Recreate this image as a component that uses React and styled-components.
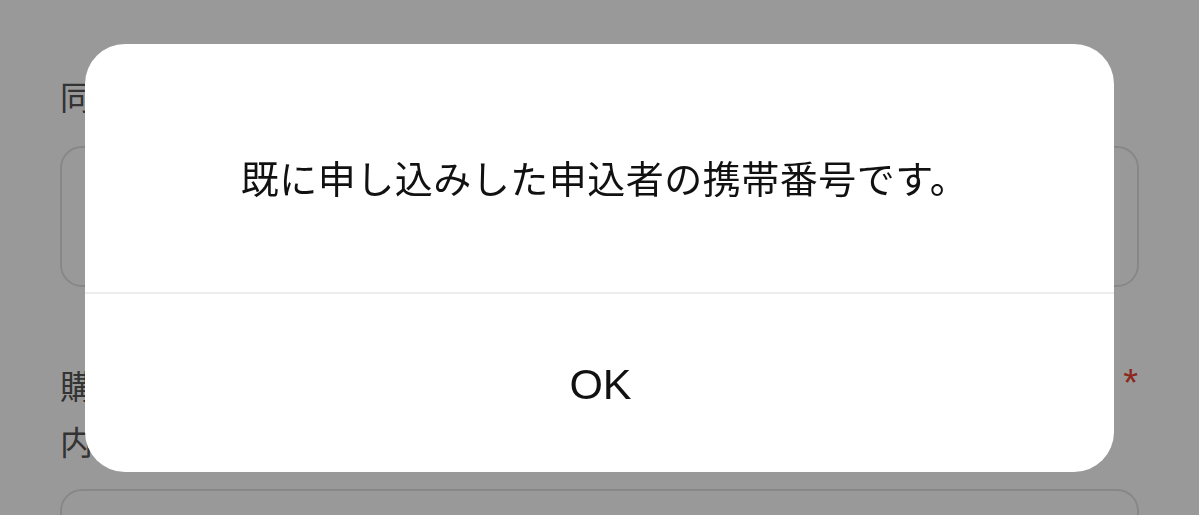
import React from "react";
import styled, { createGlobalStyle } from "styled-components";

const GlobalStyle = createGlobalStyle`
  html, body {
    margin: 0;
    padding: 0;
    background: #ffffff;
  }
  body {
    font-family: "Noto Sans CJK JP", "Noto Sans", sans-serif;
  }
`;

const FormPage = styled.div`
  padding: 72px 60px 0 60px;
  height: 515px;
  box-sizing: border-box;
  overflow: hidden;
`;

const Field = styled.div`
  margin-bottom: ${(p) => p.gapAfter || 0}px;
`;

const LabelRow = styled.div`
  display: flex;
  justify-content: space-between;
  align-items: flex-start;
  margin-bottom: ${(p) => p.gap}px;
`;

const Label = styled.div`
  font-size: 33px;
  line-height: ${(p) => p.lineHeight}px;
  color: #555555;
`;

const Required = styled.span`
  color: #e8432e;
  font-family: "Liberation Sans", sans-serif;
  font-size: 38px;
  line-height: 56px;
  margin-top: -2px;
  margin-right: 1px;
`;

const InputBox = styled.div`
  height: ${(p) => p.h}px;
  border: 2px solid #e2e2e2;
  border-radius: 22px;
  box-sizing: border-box;
`;

const Overlay = styled.div`
  position: fixed;
  inset: 0;
  background: rgba(0, 0, 0, 0.4);
  display: flex;
  align-items: center;
  justify-content: center;
`;

const Dialog = styled.div`
  width: 1029px;
  height: 428px;
  background: #ffffff;
  border-radius: 40px;
  display: flex;
  flex-direction: column;
  overflow: hidden;
`;

const Message = styled.div`
  height: 248px;
  box-sizing: border-box;
  padding: 18px 0 0 10px;
  display: flex;
  align-items: center;
  justify-content: center;
  font-size: 38px;
  letter-spacing: 0.5px;
  color: #111111;
`;

const Divider = styled.div`
  height: 2px;
  background: #ececec;
`;

const OkButton = styled.button`
  flex: 1;
  border: none;
  background: transparent;
  font-family: "Liberation Sans", Arial, sans-serif;
  font-size: 43px;
  color: #111111;
  padding: 4px 0 0 2px;
  cursor: pointer;
`;

export default function App() {
  return (
    <>
      <GlobalStyle />
      <FormPage>
        <Field gapAfter={70}>
          <LabelRow gap={26}>
            <Label lineHeight={48}>同意事項</Label>
          </LabelRow>
          <InputBox h={141} />
        </Field>
        <Field>
          <LabelRow gap={20}>
            <Label lineHeight={56}>
              購入者と申込者の関係
              <br />
              内容
            </Label>
            <Required>*</Required>
          </LabelRow>
          <InputBox h={120} />
        </Field>
      </FormPage>
      <Overlay>
        <Dialog>
          <Message>既に申し込みした申込者の携帯番号です。</Message>
          <Divider />
          <OkButton>OK</OkButton>
        </Dialog>
      </Overlay>
    </>
  );
}
